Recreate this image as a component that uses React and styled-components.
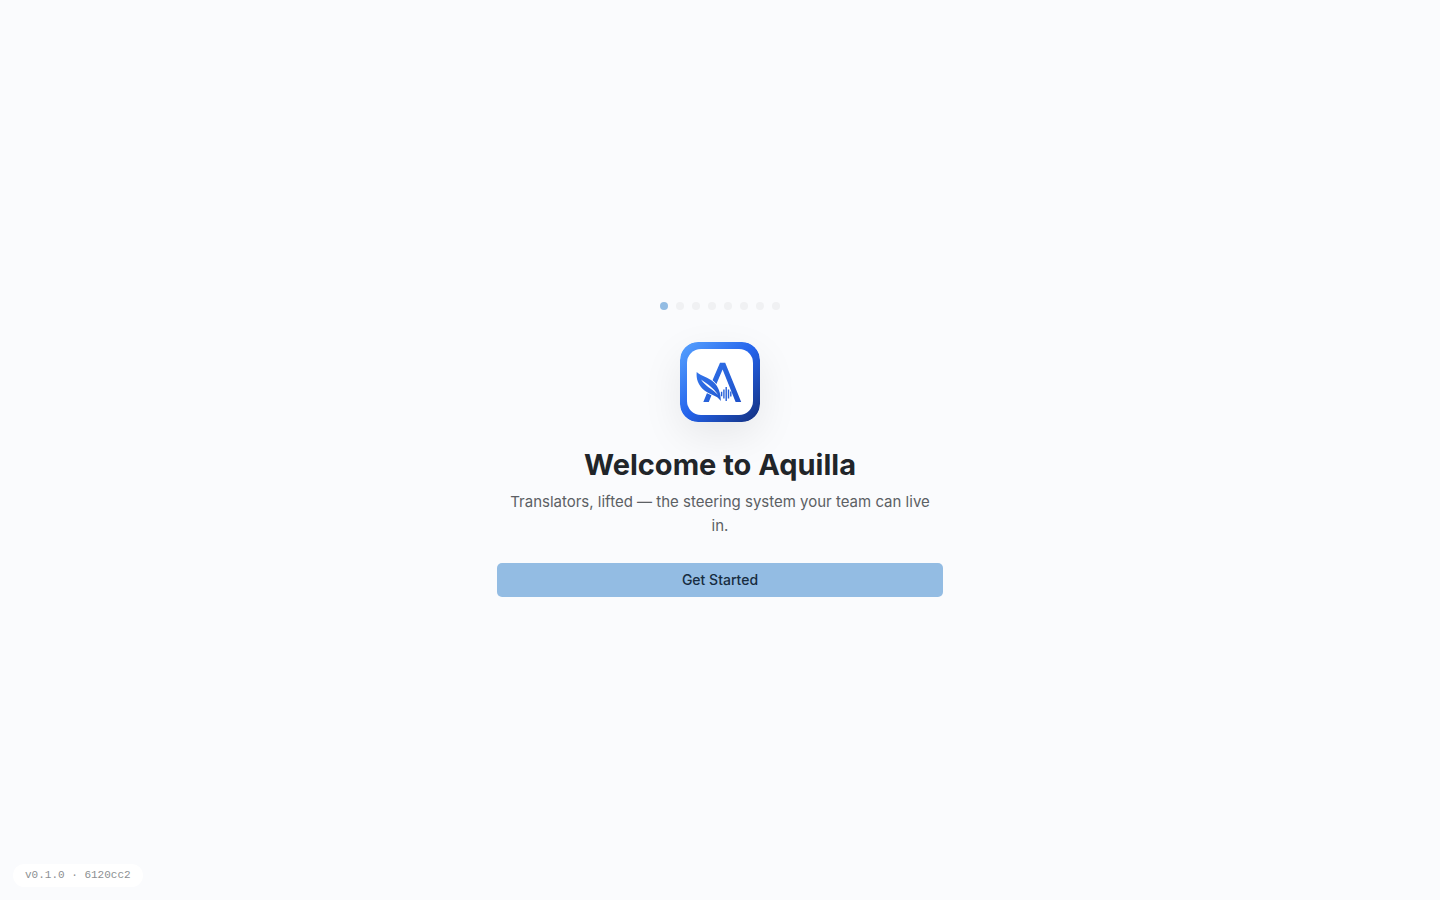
import styled, { createGlobalStyle } from 'styled-components'

const GlobalStyle = createGlobalStyle`
  * {
    box-sizing: border-box;
  }
  body {
    margin: 0;
    background: #fafbfd;
    color: #212529;
    font-family: Inter, 'Liberation Sans', sans-serif;
  }
`

const Page = styled.div`
  min-height: 100vh;
  display: flex;
  align-items: center;
  justify-content: center;
`

const Panel = styled.main`
  width: 100%;
  max-width: 512px;
  padding: 32px 33px 33px;
  display: flex;
  flex-direction: column;
`

const Steps = styled.div`
  display: flex;
  justify-content: center;
  gap: 8px;
  margin-bottom: 32px;
`

const Dot = styled.span`
  width: 8px;
  height: 8px;
  border-radius: 50%;
  background: ${({ $active }) => ($active ? '#93bce3' : '#f0f1f3')};
`

const Logo = styled.svg`
  align-self: center;
  width: 80px;
  height: 80px;
  margin-bottom: 24px;
  border-radius: 18px;
  box-shadow: 0 14px 40px rgba(0, 0, 0, 0.08);
`

const Title = styled.h1`
  margin: 0 0 7px;
  text-align: center;
  font-weight: 700;
  font-size: 29px;
  line-height: 37px;
`

const Subtitle = styled.p`
  margin: 0 0 25px;
  text-align: center;
  font-size: 15px;
  line-height: 24px;
  color: #5c6064;
`

const StartButton = styled.button`
  height: 34px;
  border: 0;
  border-radius: 5px;
  background: #93bce3;
  color: #172c40;
  font-family: inherit;
  font-weight: 500;
  font-size: 14px;
  line-height: 20px;
  cursor: pointer;
`

const Version = styled.div`
  position: fixed;
  left: 13px;
  bottom: 13px;
  padding: 3px 12px;
  border-radius: 12px;
  background: #fff;
  color: #8c8f92;
  font-family: 'Liberation Mono', monospace;
  font-size: 11px;
  line-height: 17px;
`

const steps = 8

// x position and half height of each sound bar
const bars = [
  [41.6, 2.2],
  [43.9, 4.4],
  [46.2, 7],
  [48.5, 4.6],
  [50.8, 2.4],
]

function AquillaLogo() {
  return (
    <Logo viewBox="0 0 80 80" role="img" aria-label="Aquilla">
      <defs>
        <linearGradient id="frame" x1="0" y1="0" x2="1" y2="1">
          <stop offset="0" stopColor="#58a3ff" />
          <stop offset="0.5" stopColor="#2463eb" />
          <stop offset="1" stopColor="#142f7c" />
        </linearGradient>
        <linearGradient id="mark" x1="16" y1="21" x2="61" y2="60" gradientUnits="userSpaceOnUse">
          <stop offset="0" stopColor="#3478f0" />
          <stop offset="1" stopColor="#1e50c8" />
        </linearGradient>
      </defs>
      <rect width="80" height="80" rx="18" fill="url(#frame)" />
      <rect x="7" y="7" width="66" height="66" rx="14" fill="#fff" />
      <path
        d="M40 20.7h5.2L61.2 60h-5.6L42.6 27.5 36.2 42.5 32.4 38.5Z M27 51c1.7.9 3.1 1.3 4.8 1.4L28.8 60h-5.5Z"
        fill="url(#mark)"
      />
      <path
        d="M16.7 30C21.5 34.5 28 35 33.5 40C38.5 44.5 40.8 51 40.8 59C36.5 52.5 30.5 53.5 24.5 48.5C18 43 16 37 16.7 30Z"
        fill="url(#mark)"
        stroke="#fff"
        strokeWidth="1.6"
        paintOrder="stroke"
      />
      <path
        d="M21 37.5C26.5 41.5 33 45 38.2 53C32.5 47 25.5 44.5 21 37.5Z"
        fill="#fff"
      />
      {bars.map(([x, half]) => (
        <path key={x} d={`M${x} ${52 - half}v${half * 2}`} stroke="#2760d8" strokeWidth="1.4" />
      ))}
    </Logo>
  )
}

function App() {
  return (
    <>
      <GlobalStyle />
      <Page>
        <Panel>
          <Steps>
            {Array.from({ length: steps }, (_, i) => (
              <Dot key={i} $active={i === 0} />
            ))}
          </Steps>
          <AquillaLogo />
          <Title>Welcome to Aquilla</Title>
          <Subtitle>
            Translators, lifted — the steering system your team can live
            <br />
            in.
          </Subtitle>
          <StartButton type="button">Get Started</StartButton>
        </Panel>
      </Page>
      <Version>v0.1.0 · 6120cc2</Version>
    </>
  )
}

export default App
